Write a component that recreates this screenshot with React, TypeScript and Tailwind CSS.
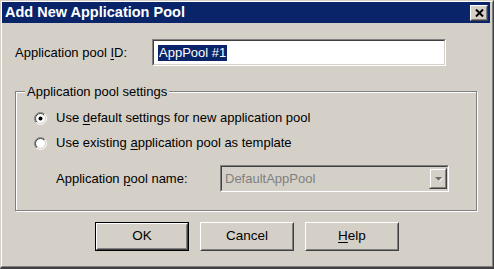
import React from 'react';

const font = "font-['Liberation_Sans',Arial,sans-serif]";

const Radio = ({ id, checked }: { id: string; checked?: boolean }) => (
  <svg width="13" height="13" viewBox="0 0 13 13" className="shrink-0">
    <defs>
      <linearGradient id={`${id}-o`} x1="0" y1="0" x2="1" y2="1">
        <stop offset="0.5" stopColor="#808080" />
        <stop offset="0.5" stopColor="#ffffff" />
      </linearGradient>
      <linearGradient id={`${id}-i`} x1="0" y1="0" x2="1" y2="1">
        <stop offset="0.5" stopColor="#404040" />
        <stop offset="0.5" stopColor="#d4d0c8" />
      </linearGradient>
    </defs>
    <circle cx="6.5" cy="6.5" r="6" fill="none" stroke={`url(#${id}-o)`} strokeWidth="1" />
    <circle cx="6.5" cy="6.5" r="5" fill="#fff" stroke={`url(#${id}-i)`} strokeWidth="1" />
    {checked && <circle cx="6.5" cy="6.5" r="2" fill="#000" />}
  </svg>
);

const Button = ({ children, isDefault }: { children: React.ReactNode; isDefault?: boolean }) => (
  <div className={`w-[94px] h-[29px] ${isDefault ? 'border border-black' : ''}`}>
    <div className="h-full border border-t-white border-l-white border-r-[#404040] border-b-[#404040]">
      <div className="h-full flex items-center justify-center border border-t-[#d4d0c8] border-l-[#d4d0c8] border-r-[#808080] border-b-[#808080] text-[13.5px] text-black">
        {children}
      </div>
    </div>
  </div>
);

const Sunken = ({ className, children }: { className: string; children: React.ReactNode }) => (
  <div className={`border border-t-[#808080] border-l-[#808080] border-r-white border-b-white ${className}`}>
    <div className="h-full border border-t-[#404040] border-l-[#404040] border-r-[#d4d0c8] border-b-[#d4d0c8] flex items-center">
      {children}
    </div>
  </div>
);

const App = () => {
  return (
    <div className={`w-[494px] h-[269px] bg-[#d4d0c8] ${font} border-r border-b-2 border-t border-l border-t-[#d4d0c8] border-l-[#d4d0c8] border-r-[#404040] border-b-[#404040] overflow-hidden`}>
      <div className="h-full flex flex-col border border-t-white border-l-white border-r-[#808080] border-b-[#808080] pr-[2px] pb-[2px]">
        {/* title bar */}
        <div className="h-[21px] bg-[#0a246a] flex items-center justify-between pl-[3px] pr-[2px] shrink-0">
          <span className="text-white font-bold text-[14.5px] leading-none">Add New Application Pool</span>
          <div className="w-[18px] h-[16px] bg-[#d4d0c8] border border-t-white border-l-white border-r-[#404040] border-b-[#404040]">
            <div className="h-full flex items-center justify-center border border-t-[#d4d0c8] border-l-[#d4d0c8] border-r-[#808080] border-b-[#808080]">
              <svg width="9" height="8" viewBox="0 0 9 8">
                <path d="M1 0.5 L8 7.5 M8 0.5 L1 7.5" stroke="#000" strokeWidth="2" />
              </svg>
            </div>
          </div>
        </div>

        <div className="pl-[13px] pt-[16px] text-[13px] text-black">
          {/* pool id */}
          <div className="flex items-center h-[27px]">
            <div className="w-[137px]">
              Application pool <span className="underline underline-offset-2">I</span>D:
            </div>
            <Sunken className="w-[294px] h-[27px] bg-white">
              <span className="ml-[4px] bg-[#0a246a] text-white leading-[16px] h-[16px] px-[1px]">AppPool #1</span>
            </Sunken>
          </div>

          {/* group box */}
          <div className="relative mt-[25px] w-[462px] h-[120px] border border-[#808080] shadow-[inset_1px_1px_0_#fff,1px_1px_0_#fff] pl-[18px] pt-[18px]">
            <div className="absolute left-[9px] top-[-9px] px-[2px] bg-[#d4d0c8] leading-[17px]">
              Application pool settings
            </div>
            <div className="flex items-center h-[16px] gap-[9px]">
              <Radio id="r1" checked />
              <span>
                Use <span className="underline underline-offset-2">d</span>efault settings for new application pool
              </span>
            </div>
            <div className="flex items-center h-[16px] gap-[9px] mt-[9px]">
              <Radio id="r2" />
              <span>
                Use existing <span className="underline underline-offset-2">a</span>pplication pool as template
              </span>
            </div>
            <div className="flex items-center h-[27px] mt-[14px] pl-[22px]">
              <div className="w-[164px]">
                Application <span className="underline underline-offset-2">p</span>ool name:
              </div>
              <Sunken className="w-[229px] h-[27px] bg-[#d4d0c8]">
                <span className="ml-[3px] flex-1 text-[#808080]">DefaultAppPool</span>
                <div className="w-[18px] h-[21px] border border-t-[#d4d0c8] border-l-[#d4d0c8] border-r-[#404040] border-b-[#404040]">
                  <div className="h-full flex items-center justify-center border border-t-white border-l-white border-r-[#808080] border-b-[#808080]">
                    <svg width="9" height="6" viewBox="0 0 9 6">
                      <path d="M1 1 L8 1 L4.5 4.5 Z" fill="#6b6b6b" />
                      <path d="M5.5 5.5 L8.5 2.5" stroke="#fff" strokeWidth="1" />
                    </svg>
                  </div>
                </div>
              </Sunken>
            </div>
          </div>

          {/* buttons */}
          <div className="flex justify-center gap-[11px] mt-[11px] w-[464px]">
            <Button isDefault>OK</Button>
            <Button>Cancel</Button>
            <Button>
              <span>
                <span className="underline underline-offset-2">H</span>elp
              </span>
            </Button>
          </div>
        </div>
      </div>
    </div>
  );
};

export default App;
